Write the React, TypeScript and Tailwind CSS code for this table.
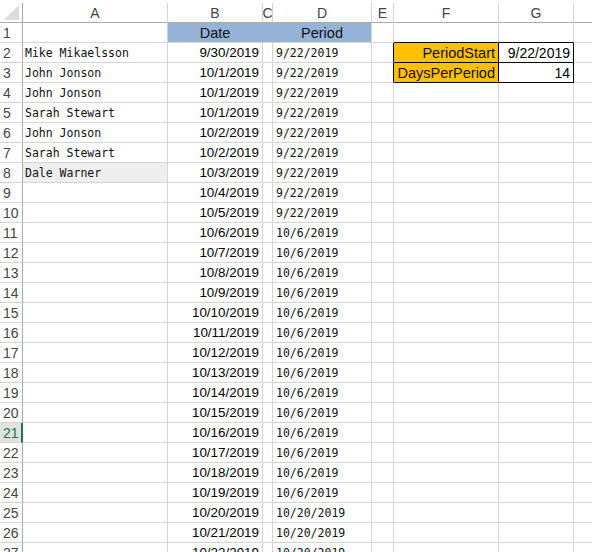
import React from 'react';
import clsx from 'clsx';

const names: Record<number, string> = {
  2: 'Mike Mikaelsson',
  3: 'John Jonson',
  4: 'John Jonson',
  5: 'Sarah Stewart',
  6: 'John Jonson',
  7: 'Sarah Stewart',
  8: 'Dale Warner',
};

const dateDays = [30, 1, 1, 1, 2, 2, 3, 4, 5, 6, 7, 8, 9, 10, 11, 12, 13, 14, 15, 16, 17, 18, 19, 20, 21, 22];

function dateFor(row: number) {
  const d = dateDays[row - 2];
  return row === 2 ? `9/${d}/2019` : `10/${d}/2019`;
}

function periodFor(row: number) {
  if (row <= 10) return '9/22/2019';
  if (row <= 24) return '10/6/2019';
  return '10/20/2019';
}

const sans = "font-['Liberation_Sans',Arial,sans-serif]";
const mono = "font-['DejaVu_Sans_Mono',monospace]";

function ColHeader({ w, label }: { w: string; label: string }) {
  return (
    <div className={clsx(w, 'h-full shrink-0 flex items-center justify-center pt-[1px] border-r border-[#d4d4d4] border-b border-b-[#ababab] text-[14px] text-[#444]', sans)}>
      {label}
    </div>
  );
}

function Row({ r }: { r: number }) {
  const active = r === 21;
  const inBox = r === 2 || r === 3;
  const aboveBox = r === 1;
  return (
    <div className="flex h-[20px]">
      <div
        className={clsx(
          'w-[23px] shrink-0 flex items-center pt-[2px] pl-[3px] border-b border-[#d4d4d4] text-[14px]',
          sans,
          active ? 'bg-[#e1e1e1] text-[#217346] border-r-2 border-r-[#217346]' : 'text-[#444] border-r border-r-[#ababab]'
        )}
      >
        {r}
      </div>
      <div
        className={clsx(
          'w-[145px] shrink-0 flex items-center pt-[2px] pl-[2px] border-r border-b border-[#d4d4d4] text-[11.5px] text-[#111] whitespace-nowrap',
          mono,
          r === 8 && 'bg-[#eeeeee]'
        )}
      >
        {names[r] ?? ''}
      </div>
      {r === 1 ? (
        <>
          <div className={clsx('w-[95px] shrink-0 flex items-center justify-center pt-[2px] bg-[#95b3d7] border-r border-r-[#95b3d7] border-b border-[#d4d4d4] text-[14.5px] text-[#111]', sans)}>
            Date
          </div>
          <div className="w-[10px] shrink-0 bg-[#95b3d7] border-r border-r-[#95b3d7] border-b border-[#d4d4d4]" />
          <div className={clsx('w-[99px] shrink-0 flex items-center justify-center pt-[2px] bg-[#95b3d7] border-r border-[#d4d4d4] border-b text-[14.5px] text-[#111]', sans)}>
            Period
          </div>
        </>
      ) : (
        <>
          <div className={clsx('w-[95px] shrink-0 flex items-center justify-end pt-[2px] pr-[3px] border-r border-b border-[#d4d4d4] text-[13.4px] text-black', sans)}>
            {dateFor(r)}
          </div>
          <div className="w-[10px] shrink-0 border-r border-b border-[#d4d4d4]" />
          <div className={clsx('w-[99px] shrink-0 flex items-center pt-[2px] pl-[3px] border-r border-b border-[#d4d4d4] text-[11.5px] text-[#111]', mono)}>
            {periodFor(r)}
          </div>
        </>
      )}
      <div className={clsx('w-[22px] shrink-0 border-b border-[#d4d4d4] border-r', inBox ? 'border-r-black' : 'border-r-[#d4d4d4]')} />
      <div
        className={clsx(
          'w-[105px] shrink-0 flex items-center justify-end pt-[2px] pr-[3px] border-r border-b text-[14.5px] text-[#111]',
          sans,
          inBox ? 'bg-[#ffc000] border-black' : aboveBox ? 'border-r-[#d4d4d4] border-b-black' : 'border-[#d4d4d4]'
        )}
      >
        {r === 2 ? 'PeriodStart' : r === 3 ? 'DaysPerPeriod' : ''}
      </div>
      <div
        className={clsx(
          'w-[75px] shrink-0 flex items-center justify-end pt-[2px] pr-[3px] border-r border-b text-[14px] text-black',
          sans,
          inBox ? 'border-black' : aboveBox ? 'border-r-[#d4d4d4] border-b-black' : 'border-[#d4d4d4]'
        )}
      >
        {r === 2 ? '9/22/2019' : r === 3 ? '14' : ''}
      </div>
      <div className="flex-1 border-b border-[#d4d4d4]" />
    </div>
  );
}

export default function App() {
  const rows = Array.from({ length: 27 }, (_, i) => i + 1);
  return (
    <div className="w-[592px] h-[552px] overflow-hidden bg-white">
      <div className="h-[23px] pt-[3px] flex">
        <div className="w-[23px] h-full shrink-0 relative border-r border-r-[#ababab] border-b border-b-[#ababab]">
          <svg width="15" height="15" viewBox="0 0 15 15" className="absolute right-[3px] bottom-[2px]">
            <polygon points="15,0 15,15 0,15" fill="#dcdcdc" />
          </svg>
        </div>
        <ColHeader w="w-[145px]" label="A" />
        <ColHeader w="w-[95px]" label="B" />
        <ColHeader w="w-[10px]" label="C" />
        <ColHeader w="w-[99px]" label="D" />
        <ColHeader w="w-[22px]" label="E" />
        <ColHeader w="w-[105px]" label="F" />
        <ColHeader w="w-[75px]" label="G" />
        <div className="flex-1 h-full border-b border-b-[#ababab]" />
      </div>
      {rows.map((r) => (
        <Row key={r} r={r} />
      ))}
    </div>
  );
}
